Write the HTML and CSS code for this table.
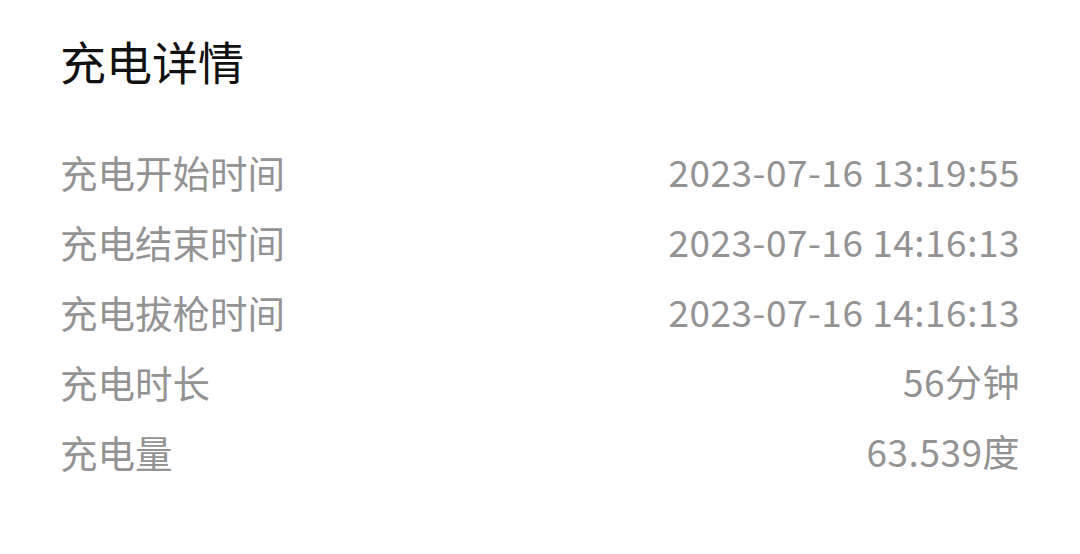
FILE: index.html
```html
<!DOCTYPE html>
<html>
<head>
    <title>充电详情</title>
    <link rel="stylesheet" href="styles.css">
</head>
<body>
    <div class="card">
        <h1 class="title">充电详情</h1>
        <div class="rows">
            <div class="row"><span class="label">充电开始时间</span><span class="value">2023-07-16 13:19:55</span></div>
            <div class="row"><span class="label">充电结束时间</span><span class="value">2023-07-16 14:16:13</span></div>
            <div class="row"><span class="label">充电拔枪时间</span><span class="value">2023-07-16 14:16:13</span></div>
            <div class="row"><span class="label">充电时长</span><span class="value">56分钟</span></div>
            <div class="row"><span class="label">充电量</span><span class="value">63.539度</span></div>
        </div>
    </div>
</body>
</html>
```

FILE: styles.css
```css
body {
    margin: 0;
    padding: 0;
    background-color: #ffffff;
    font-family: 'Noto Sans CJK SC', 'Noto Sans', sans-serif;
}
.card {
    padding: 27px 60px 0 60px;
}
.title {
    margin: 0;
    font-size: 46px;
    font-weight: 400;
    line-height: 66px;
    color: #111111;
}
.rows {
    margin-top: 43px;
    display: flex;
    flex-direction: column;
}
.row {
    display: flex;
    justify-content: space-between;
    align-items: center;
    height: 70px;
    font-size: 37.5px;
    color: #939393;
}
.value {
    font-size: 37px;
    letter-spacing: 0.5px;
    font-variant-numeric: proportional-nums;
}
```
